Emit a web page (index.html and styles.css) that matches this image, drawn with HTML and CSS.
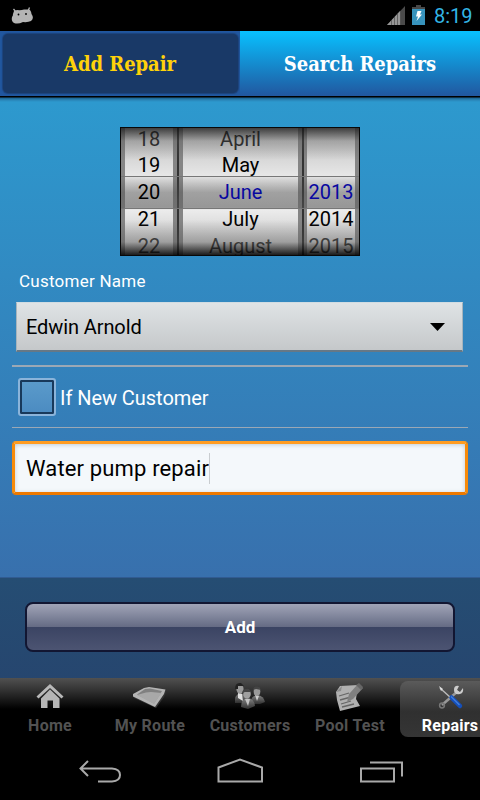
FILE: index.html
```html
<!DOCTYPE html>
<html lang="en">
<head>
    <meta charset="UTF-8">
    <meta name="viewport" content="width=device-width, initial-scale=1.0">
    <title>Add Repair</title>
    <link rel="stylesheet" href="styles.css">
</head>
<body>
    <div class="status-bar">
        <svg class="android" width="24" height="18" viewBox="0 0 24 18">
            <path d="M2.500 3 L5 6 M18.500 1.500 L17 5" stroke="#b4b4b4" stroke-width="1.300"/>
            <path d="M3 5 L6 4 Q10 4.500 13 3.500 L18 3.500 Q20 4 20.500 8 Q23.500 12 20 15 Q17 16.500 12 16 Q7 18.500 3 17 Q0 15 1 11 Q2 10 2 8 Z" fill="#b4b4b4"/>
            <circle cx="7.500" cy="8.500" r="0.900" fill="#000"/>
            <circle cx="15" cy="8" r="0.900" fill="#000"/>
        </svg>
        <div class="status-right">
            <svg width="18" height="20" viewBox="0 0 18 20">
                <path d="M0 19 L18 0 V19 Z" fill="#4a4a4a"/>
                <path d="M0 19 L13 5 V19 Z" fill="#969696"/>
                <path d="M4.500 14 V19 M7.500 11 V19 M10.500 8 V19 M13.500 5 V19" stroke="#555" stroke-width="0.800"/>
            </svg>
            <svg class="battery" width="13" height="20" viewBox="0 0 13 20">
                <path d="M4 -1 H9 V1 H13 V4 H0 V1 H4 Z" fill="#484848"/>
                <rect y="3" width="13" height="16" fill="#3793bc"/>
                <path d="M5.500 5 H9.500 L8 8.500 H10 L4.500 15 L6 10.500 H4 Z" fill="#fff"/>
            </svg>
            <span class="clock">8:19</span>
        </div>
    </div>

    <div class="tabs">
        <div class="tab active"><span>Add Repair</span></div>
        <div class="tab"><span>Search Repairs</span></div>
    </div>

    <div class="content">
        <div class="picker">
            <div class="wheel day">
                <div>18</div>
                <div>19</div>
                <div>20</div>
                <div>21</div>
                <div>22</div>
            </div>
            <div class="wheel month">
                <div>April</div>
                <div>May</div>
                <div class="current">June</div>
                <div>July</div>
                <div>August</div>
            </div>
            <div class="wheel year">
                <div>&nbsp;</div>
                <div>&nbsp;</div>
                <div class="current">2013</div>
                <div>2014</div>
                <div>2015</div>
            </div>
        </div>

        <label class="field-label">Customer Name</label>
        <div class="spinner">
            <span>Edwin Arnold</span>
            <svg width="15" height="8" viewBox="0 0 15 8"><path d="M0 0 H15 L7.500 8 Z" fill="#000"/></svg>
        </div>

        <div class="check-row">
            <span class="checkbox"></span>
            <span class="check-text">If New Customer</span>
        </div>

        <div class="text-field"><span>Water pump repair</span><i class="cursor"></i></div>
    </div>

    <div class="action-bar">
        <button class="add-button">Add</button>
    </div>

    <div class="nav">
        <div class="nav-item">
            <svg width="50" height="34" viewBox="0 0 50 34">
                <path d="M25 4 L38.500 16.500 L36.500 18.500 L25 8 L13.500 18.500 L11.500 16.500 Z" fill="#b8b8b8"/>
                <path d="M25 9.500 L34.500 18.500 V28 H28 V20.500 H22.500 V28 H16 V18.500 Z" fill="#b5b5b5"/>
            </svg>
            <span>Home</span>
        </div>
        <div class="nav-item">
            <svg width="50" height="34" viewBox="0 0 50 34">
                <path d="M8 16 L20 8 L42 10 L39 17 L31 28 L9 18 Z" fill="#333"/>
                <path d="M8 14 L19 8 L24 7 L40.500 9.500 L39 14 L30 27 L8 16.500 Z" fill="#b4b4b4"/>
                <path d="M12 14.500 L20 9 L25 8.500 L37 11 L29 23.500 Z" fill="#808080"/>
                <path d="M12 15 L21 12.500 L26 12 L36.500 13 L29 24 Z" fill="#a8a8a8"/>
            </svg>
            <span>My Route</span>
        </div>
        <div class="nav-item">
            <svg width="50" height="34" viewBox="0 0 50 34">
                <defs>
                    <linearGradient id="suit" x2="0" y2="1"><stop stop-color="#858585"/><stop offset="1" stop-color="#303030"/></linearGradient>
                </defs>
                <path d="M10 23 Q9 15 15 13 Q22 14 22 23 Z" fill="url(#suit)"/>
                <path d="M13 13 L17 14 L18 21 L13 18 Z" fill="#e0e0e0"/>
                <ellipse cx="15" cy="9" rx="3.600" ry="4.600" fill="#999"/>
                <path d="M10 9 Q10 2 16 3 L19 6 L13 6 V9 Z" fill="#222"/>
                <path d="M26 24 Q25 16 32 15 Q39 16 40 22 L35 24 Z" fill="url(#suit)"/>
                <path d="M30 15 L34 16 L32 21 Z" fill="#ccc"/>
                <ellipse cx="32" cy="11.500" rx="3.300" ry="4.400" fill="#999"/>
                <path d="M28 10 Q29 5 34 7 L36 10 L31 9 Z" fill="#444"/>
                <path d="M16 27 Q16 19 22 18 Q29 18 30 26 L23 29 Z" fill="url(#suit)"/>
                <path d="M20 19 L25 19 L23 26 Z" fill="#c4c4c4"/>
                <ellipse cx="22" cy="14" rx="3.800" ry="4.600" fill="#a0a0a0"/>
                <path d="M17 13 Q18 8 24 9 L26 12 L20 12 Z" fill="#444"/>
            </svg>
            <span>Customers</span>
        </div>
        <div class="nav-item">
            <svg width="50" height="34" viewBox="0 0 50 34">
                <path d="M11 12 L15 6 L33 5 L31 19 L35 26 L15 31 L12 20 Z" fill="#b0b0b0"/>
                <path d="M11 12 L16 11 L17 6 Z" fill="#8b8b8b"/>
                <path d="M14 16 L24 13 M15 20 L26 17 M16 24 L26 21 M17 27 L29 24" stroke="#666" stroke-width="1.300"/>
                <path d="M22 22 L24 14 L33 4 L38 8 L28 19 Z" fill="#808080"/>
                <path d="M31 5 L34 3 L38 7 L36 10 Z" fill="#666"/>
            </svg>
            <span>Pool Test</span>
        </div>
        <div class="nav-item selected">
            <svg width="50" height="34" viewBox="0 0 50 34">
                <path d="M17 25 L33 11" stroke="#999" stroke-width="2.500"/>
                <circle cx="17" cy="25.500" r="2.400" fill="none" stroke="#777" stroke-width="1.500"/>
                <path d="M34 6 L32 10 L35 12 L38 8 Q39 13 35 14 Q29 15 29 10 Q29 5 34 6 Z" fill="#ccc"/>
                <path d="M15 8 L26 18" stroke="#bcbcbc" stroke-width="1.400"/>
                <path d="M14 6 L18 9 L16 11 Z" fill="#ddd"/>
                <path d="M26.500 17.500 L35 26" stroke="#154fba" stroke-width="4.500" stroke-linecap="round"/>
                <path d="M26 16.500 L34.500 25" stroke="#4380dc" stroke-width="1.300"/>
            </svg>
            <span>Repairs</span>
        </div>
    </div>

    <div class="system-bar">
        <svg width="480" height="60" viewBox="0 0 480 60" fill="none" stroke="#a9a9a9" stroke-width="2">
            <path d="M88 21 L80.500 28.500 L88 36 M81 28.500 H112 Q120 29 120 35 Q120 41 112 41.500 H98"/>
            <path d="M218.500 41.500 V27.500 L240 19.500 L262 27.500 V41.500 Z"/>
            <path d="M361 28.500 H394 V41.500 H361 Z M370 22.500 H402 V36.500"/>
        </svg>
    </div>
</body>
</html>
```
FILE: styles.css
```css
* {
    box-sizing: border-box;
}
body {
    margin: 0;
    width: 480px;
    height: 800px;
    overflow: hidden;
    display: flex;
    flex-direction: column;
    background: #000;
    font-family: Roboto, sans-serif;
}
svg {
    display: block;
    overflow: visible;
}

/* status bar */
.status-bar {
    height: 31px;
    display: flex;
    justify-content: space-between;
    padding: 6px 7px 0 11px;
}
.status-right {
    display: flex;
}
.battery {
    margin: 0 9px 0 7px;
}
.clock {
    font-size: 20px;
    line-height: 21px;
    width: 39px;
    color: #33b5e5;
}

/* tabs */
.tabs {
    height: 65px;
    display: flex;
    background: #21579f;
}
.tab {
    width: 240px;
    display: flex;
    align-items: center;
    justify-content: center;
    font-family: "DejaVu Serif Condensed", "DejaVu Serif", serif;
    font-stretch: condensed;
    font-weight: bold;
    font-size: 20px;
    letter-spacing: -0.05px;
    color: #fff;
    background: linear-gradient(#08c1ff, #21579f);
}
.tab.active {
    width: 235px;
    margin: 3px 2px 3px 3px;
    padding-right: 1px;
    border-radius: 5px;
    color: #ffd20a;
    background: #193967;
    box-shadow: 0 0 1px 1px #1c437b;
}

/* form */
.content {
    height: 481px;
    padding: 31px 12px 0;
    background: linear-gradient(#000 0, #000 1px, #1c6390 2px, #2985b8 4px, #2d99ce 6px, #3870ad 100%);
}
.picker {
    position: relative;
    width: 240px;
    height: 129px;
    margin: 0 auto;
    display: flex;
    overflow: hidden;
    border: 1px solid #080808;
    background: #333;
}
.wheel {
    font-size: 20px;
    line-height: 27px;
    text-align: center;
    color: #000;
    border: solid #858585;
    border-width: 0 4px;
    background: linear-gradient(#bbb 0, #e7e7e7 48px, #cfcfcf 79px, #ececec 82px, #bbb 127px);
}
.wheel div {
    position: relative;
    margin-left: -2px;
    margin-right: -2px;
}
.wheel div:first-child {
    margin-top: -2px;
    color: #222;
}
.wheel div:nth-child(2) {
    margin-top: -1px;
}
.wheel div:nth-child(3) {
    z-index: 1;
}
.wheel div:last-child {
    margin-top: 4px;
    line-height: 19px;
    color: #333;
}
.wheel .current {
    color: #0808a0;
}
.day {
    width: 56px;
}
.month {
    width: 123px;
    margin: 0 2px;
}
.year {
    width: 55px;
    border-left-width: 3px;
    white-space: nowrap;
}
/* band over the selected row */
.picker::before {
    content: "";
    position: absolute;
    z-index: 1;
    left: 0;
    right: 0;
    top: 48px;
    height: 31px;
    border: 1px solid #777;
    border-width: 1px 0;
    background: linear-gradient(rgba(100, 100, 100, 0.05), rgba(75, 75, 75, 0.4) 50%, rgba(90, 90, 90, 0.48));
}
.picker::after {
    content: "";
    position: absolute;
    z-index: 2;
    inset: 0;
    background: linear-gradient(rgba(20, 20, 20, 0.75) 0, rgba(80, 80, 80, 0.3) 13px, transparent 32px, transparent 92px, rgba(80, 80, 80, 0.35) 114px, rgba(0, 0, 0, 0.85) 127px);
}
.field-label {
    display: block;
    margin: 14px 0 0 7px;
    font-size: 17px;
    line-height: 22px;
    letter-spacing: 0.25px;
    color: #fff;
}
.spinner {
    height: 50px;
    margin: 10px 5px 13px 4px;
    padding: 0 17px 0 9px;
    display: flex;
    align-items: center;
    justify-content: space-between;
    font-size: 20px;
    color: #000;
    background: linear-gradient(#dfe3e5, #c5c8ca);
    border: 1px solid #a7b4bc;
    border-top-color: #d1dce2;
    border-bottom: 2px solid #667886;
}
.spinner span {
    letter-spacing: -0.1px;
}
.check-row {
    height: 63px;
    display: flex;
    align-items: center;
    border: solid #9ba8b5;
    border-width: 2px 0 1px;
}
.checkbox {
    width: 38px;
    height: 38px;
    margin-left: 6px;
    border: 2px solid #8bb4da;
    border-radius: 3px;
    background: linear-gradient(#5b9bcb, #4b8bc1);
    box-shadow: inset 0 0 0 2px #18395b;
}
.check-text {
    margin-left: 4px;
    padding-top: 1px;
    font-size: 20px;
    letter-spacing: -0.05px;
    color: #fff;
}
.text-field {
    height: 54px;
    margin-top: 13px;
    display: flex;
    align-items: center;
    padding: 1px 0 0 11px;
    font-size: 22px;
    letter-spacing: 0.15px;
    color: #000;
    background: #f4f8fb;
    border: 3px solid #f78b0a;
    border-top-color: #ff9c20;
    border-bottom-color: #ed7900;
    border-radius: 4px;
    box-shadow: inset 0 1px 4px rgba(90, 120, 150, 0.35);
}
.cursor {
    width: 1px;
    height: 31px;
    background: #c9cdd0;
}

/* bottom action */
.action-bar {
    height: 101px;
    padding: 24px 25px;
    border-top: 1px solid #315b91;
    background: linear-gradient(#254d73, #26466f);
}
.add-button {
    display: block;
    width: 430px;
    height: 50px;
    padding: 0;
    border: 2px solid #121632;
    border-radius: 8px;
    font-family: Roboto, sans-serif;
    font-weight: bold;
    font-size: 17px;
    color: #fff;
    background: linear-gradient(#a0a4b7 0, #656b84 50%, #3b4463 51%, #4c5472 100%);
}

/* bottom navigation */
.nav {
    height: 62px;
    display: flex;
    padding-top: 2px;
    background: linear-gradient(#515151 0, #303030 13px, #000 31px);
}
.nav-item {
    flex: 0 0 100px;
    display: flex;
    flex-direction: column;
    align-items: center;
    font-size: 16px;
    font-weight: bold;
    line-height: 24px;
    color: #525252;
}
.nav-item span {
    letter-spacing: 0.25px;
}
.nav-item.selected {
    height: 56px;
    margin-top: 1px;
    border-radius: 8px;
    color: #fff;
    background: linear-gradient(#5b5b5b, #303030 55%, #353535);
}
.nav-item.selected svg {
    margin-top: -1px;
}
.system-bar {
    height: 60px;
}
```
